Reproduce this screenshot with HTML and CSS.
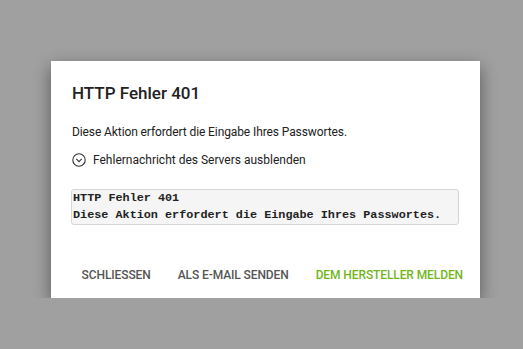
FILE: index.html
```html
<!DOCTYPE html>
<html>
    <head>
        <meta charset="UTF-8">
        <title>HTTP Fehler 401</title>
        <link rel="stylesheet" href="styles.css">
    </head>
    <body>
        <div class="dialog">
            <div class="content">
                <h2 class="title">HTTP Fehler 401</h2>
                <p class="message">Diese Aktion erfordert die Eingabe Ihres Passwortes.</p>
                <div class="toggle">
                    <svg class="toggle_icon" width="14" height="14" viewBox="0 0 14 14">
                        <circle cx="7" cy="7" r="6.2" fill="none" stroke="#333" stroke-width="1.1"/>
                        <path d="M4.3 5.9 L7 8.6 L9.7 5.9" fill="none" stroke="#333" stroke-width="1.1"/>
                    </svg>
                    <span>Fehlernachricht des Servers ausblenden</span>
                </div>
                <pre class="server_msg">HTTP Fehler 401
Diese Aktion erfordert die Eingabe Ihres Passwortes.</pre>
            </div>
            <div class="actions">
                <button class="btn">Schliessen</button>
                <button class="btn">Als E-Mail senden</button>
                <button class="btn primary">Dem Hersteller melden</button>
            </div>
        </div>
    </body>
</html>
```

FILE: styles.css
```css
body{
    margin: 0;
    background-color: #a0a0a0;
    font-family: Roboto, "Liberation Sans", sans-serif;
}
.dialog{
    margin: 61px 0 0 51px;
    width: 429px;
    background-color: white;
    box-shadow: 0 6px 16px rgba(0, 0, 0, 0.45);
}
.content{
    padding: 20px 21px 0 21px;
}
.title{
    margin: 0;
    font-size: 17px;
    font-weight: 500;
    line-height: 24px;
    color: #212121;
}
.message{
    margin: 17px 0 0 0;
    font-size: 12px;
    letter-spacing: -0.1px;
    line-height: 20px;
    color: #212121;
}
.toggle{
    display: flex;
    align-items: center;
    gap: 7px;
    margin-top: 11px;
    font-size: 12px;
    color: #212121;
}
.server_msg{
    margin: 22px 0 0 -1px;
    padding: 0 1px;
    border: 1px solid #d6d6d6;
    border-radius: 3px;
    background-color: #f5f5f5;
    font-family: "Liberation Mono", monospace;
    font-size: 11.8px;
    font-weight: bold;
    line-height: 17px;
    color: #222;
}
.actions{
    display: flex;
    justify-content: flex-end;
    gap: 11px;
    padding: 39px 9px 12px 0;
}
.btn{
    border: none;
    background: none;
    padding: 4px 8px;
    white-space: nowrap;
    font-family: Roboto, "Liberation Sans", sans-serif;
    font-size: 12px;
    font-weight: 500;
    letter-spacing: -0.1px;
    text-transform: uppercase;
    color: #555;
    cursor: pointer;
}
.btn.primary{
    color: #72b51a;
}
```
